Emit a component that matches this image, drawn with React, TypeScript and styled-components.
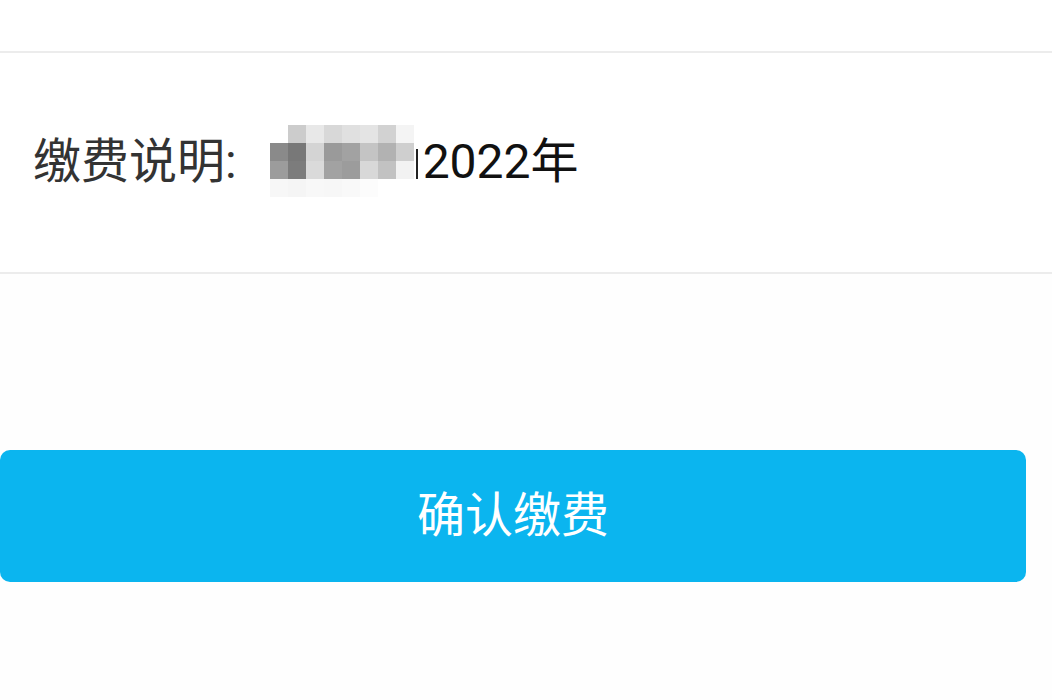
import React from 'react';
import styled, { createGlobalStyle } from 'styled-components';

const GlobalStyle = createGlobalStyle`
  html, body {
    margin: 0;
    padding: 0;
    background: #fefefe;
  }
  body {
    font-family: Roboto, "Noto Sans CJK SC", sans-serif;
  }
`;

const Page = styled.div`
  width: 1052px;
  height: 700px;
  display: flex;
  flex-direction: column;
  background: #fefefe;
  overflow: hidden;
`;

const TopBlank = styled.div`
  height: 51px;
  background: #ffffff;
  border-bottom: 2px solid #ececec;
`;

const InfoRow = styled.div`
  height: 219px;
  display: flex;
  align-items: center;
  padding-left: 33px;
  background: #ffffff;
  border-bottom: 2px solid #ececec;
`;

const Label = styled.span`
  font-size: 48px;
  color: #333333;
  margin-top: -12px;
`;

const Value = styled.span`
  display: flex;
  align-items: center;
  font-size: 48px;
  color: #111111;
  margin-top: -12px;
`;

const Mosaic = styled.div`
  display: grid;
  grid-template-columns: repeat(8, 18px);
  grid-auto-rows: 18px;
  margin-left: 33px;
  margin-top: -4px;
`;

const Tile = styled.span<{ $c: string }>`
  background: ${(p) => p.$c};
`;

const Caret = styled.span`
  width: 2px;
  height: 30px;
  margin: 14px 5px 0 2px;
  background: #222222;
`;

const Footer = styled.div`
  padding-top: 176px;
  padding-right: 26px;
`;

const ConfirmButton = styled.button`
  width: 100%;
  height: 132px;
  border: none;
  border-radius: 10px;
  background: #0bb5ef;
  color: #ffffff;
  font-family: "Noto Sans CJK SC", sans-serif;
  font-size: 48px;
  display: flex;
  align-items: center;
  justify-content: center;
  padding: 0 0 10px;
`;

const tiles = [
  '#ffffff', '#cccccc', '#e8e8e8', '#d8d8d8', '#e0e0e0', '#e4e4e4', '#d2d2d2', '#f4f4f4',
  '#8a8a8a', '#787878', '#d4d4d4', '#9a9a9a', '#a2a2a2', '#c4c4c4', '#b2b2b2', '#cfcfcf',
  '#9c9c9c', '#7c7c7c', '#dadada', '#a2a2a2', '#9c9c9c', '#d8d8d8', '#c2c2c2', '#f2f2f2',
  '#f7f7f7', '#f5f5f5', '#f8f8f8', '#f7f7f7', '#f9f9f9', '#fcfcfc', '#ffffff', '#ffffff',
];

const App: React.FC = () => {
  return (
    <>
      <GlobalStyle />
      <Page>
        <TopBlank />
        <InfoRow>
          <Label>缴费说明:</Label>
          <Mosaic>
            {tiles.map((c, i) => (
              <Tile key={i} $c={c} />
            ))}
          </Mosaic>
          <Value>
            <Caret />2022年
          </Value>
        </InfoRow>
        <Footer>
          <ConfirmButton>确认缴费</ConfirmButton>
        </Footer>
      </Page>
    </>
  );
};

export default App;
